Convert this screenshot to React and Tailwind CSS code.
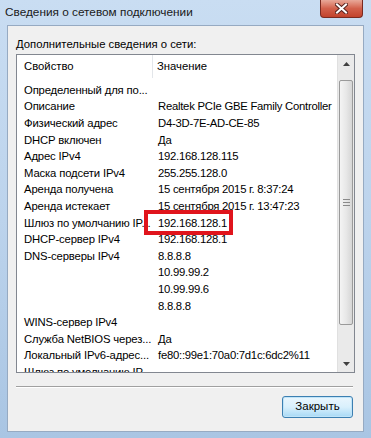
import React from 'react';

const rows = [
  ['Определенный для по...', ''],
  ['Описание', 'Realtek PCIe GBE Family Controller'],
  ['Физический адрес', 'D4-3D-7E-AD-CE-85'],
  ['DHCP включен', 'Да'],
  ['Адрес IPv4', '192.168.128.115'],
  ['Маска подсети IPv4', '255.255.128.0'],
  ['Аренда получена', '15 сентября 2015 г. 8:37:24'],
  ['Аренда истекает', '15 сентября 2015 г. 13:47:23'],
  ['Шлюз по умолчанию IP...', '192.168.128.1', true],
  ['DHCP-сервер IPv4', '192.168.128.1'],
  ['DNS-серверы IPv4', '8.8.8.8'],
  ['', '10.99.99.2'],
  ['', '10.99.99.6'],
  ['', '8.8.8.8'],
  ['WINS-сервер IPv4', ''],
  ['Служба NetBIOS через...', 'Да'],
  ['Локальный IPv6-адрес...', 'fe80::99e1:70a0:7d1c:6dc2%11'],
  ['Шлюз по умолчанию IP...', ''],
];

function Scrollbar() {
  return (
    <div className="w-[17px] h-full bg-[#eaeaea] border-l border-[#e0e0e0] flex flex-col">
      <div className="h-[17px] flex items-center justify-center">
        <svg width="7" height="4" viewBox="0 0 7 4">
          <path d="M0 4 L3.5 0 L7 4 Z" fill="#404040" />
        </svg>
      </div>
      <div className="mx-[1px] mt-[8px] h-[245px] rounded-[2px] border border-[#9a9a9a] bg-gradient-to-r from-[#f4f4f4] via-[#e8e8e8] to-[#d6d6d6] flex items-center justify-center">
        <div className="flex flex-col gap-[2px]">
          <div className="w-[7px] h-[1px] bg-[#8a8a8a]" />
          <div className="w-[7px] h-[1px] bg-[#8a8a8a]" />
          <div className="w-[7px] h-[1px] bg-[#8a8a8a]" />
        </div>
      </div>
      <div className="flex-1" />
      <div className="h-[17px] flex items-center justify-center">
        <svg width="7" height="4" viewBox="0 0 7 4">
          <path d="M0 0 L3.5 4 L7 0 Z" fill="#404040" />
        </svg>
      </div>
    </div>
  );
}

export default function App() {
  return (
    <div
      className="relative w-[371px] h-[438px] overflow-hidden bg-gradient-to-b from-[#c9ddf2] via-[#bcd3ec] to-[#a9c5e3] text-[11.3px] text-black"
      style={{ fontFamily: '"Liberation Sans", Arial, sans-serif' }}
    >
      {/* Title bar */}
      <div className="h-[25px] flex items-center pl-[5px] text-[11.8px] text-[#1a1a1a]">
        Сведения о сетевом подключении
      </div>

      {/* Close button */}
      <div className="absolute top-0 left-[320px] w-[43px] h-[18px] rounded-b-[4px] border border-t-0 border-[#7a2a20] bg-gradient-to-b from-[#e8a899] via-[#d2604b] to-[#c2432c] flex items-center justify-center">
        <svg width="13" height="11" viewBox="0 0 13 11">
          <path d="M2 1.5 L11 9.5 M11 1.5 L2 9.5" stroke="#5a2520" strokeWidth="4" strokeLinecap="square" />
          <path d="M2 1.5 L11 9.5 M11 1.5 L2 9.5" stroke="#ffffff" strokeWidth="2" strokeLinecap="square" />
        </svg>
      </div>

      {/* Client area */}
      <div className="mx-[7px] h-[407px] bg-[#f0f0f0] border border-[#96aac2] relative">
        <div className="pl-[8px] pt-[10px] h-[28px] leading-[16px]">Дополнительные сведения о сети:</div>

        <div className="ml-[8px] w-[339px] h-[319px] border border-[#828790] bg-white flex overflow-hidden">
          <div className="flex-1 flex flex-col overflow-hidden">
            <div className="h-[23px] flex shrink-0 items-stretch">
              <div className="w-[136px] pl-[7px] flex items-center border-r border-[#e3e6ea]">Свойство</div>
              <div className="pl-[4px] flex items-center">Значение</div>
            </div>
            <div className="pt-[4px]">
              {rows.map(([k, v, hl], i) => (
                <div key={i} className="h-[16.6px] flex items-center whitespace-nowrap">
                  <div className="w-[136px] shrink-0 pl-[7px] tracking-[-0.15px]">{k}</div>
                  <div className="pl-[5px] relative tracking-[-0.25px]">
                    {v}
                    {hl && (
                      <div className="absolute left-[-9px] top-[-5px] w-[89px] h-[25px] border-[4px] border-[#e0141c]" />
                    )}
                  </div>
                </div>
              ))}
            </div>
          </div>
          <Scrollbar />
        </div>

        <div className="ml-[8px] mt-[13px] w-[337px] h-[2px] border-t border-[#a0a0a0] border-b border-b-white" />

        <div className="flex justify-end pr-[10px] mt-[8px]">
          <button className="w-[71px] h-[22px] rounded-[3px] border border-[#3c7fb1] bg-gradient-to-b from-[#eaf6fd] via-[#d9f0fc] to-[#a7d9f5] text-[11.5px] shadow-[inset_0_0_0_1px_#c0e4f8]">
            Закрыть
          </button>
        </div>
      </div>
    </div>
  );
}
